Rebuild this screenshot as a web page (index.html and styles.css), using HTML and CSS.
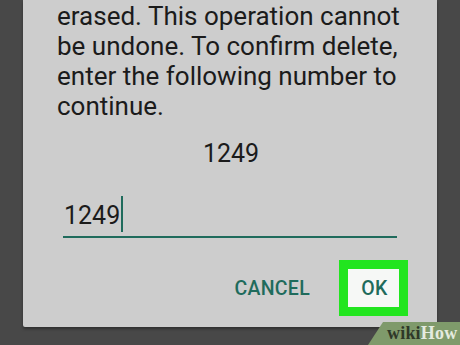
FILE: index.html
```html
<!DOCTYPE html>
<html>
<head>
<meta charset="utf-8">
<link rel="stylesheet" href="styles.css">
</head>
<body>
<div class="screen">
  <div class="dialog">
    <p class="message">erased. This operation cannot be undone. To confirm delete, enter the following number to continue.</p>
    <div class="code">1249</div>
    <div class="field"><span class="value">1249</span><span class="cursor"></span></div>
    <div class="actions">
      <span class="btn cancel">CANCEL</span>
      <span class="ok-wrap"><span class="btn ok">OK</span></span>
    </div>
  </div>
  <div class="watermark"><span class="wiki">wiki</span><span class="how">How</span></div>
</div>
</body>
</html>
```
FILE: styles.css
```css
html, body {
  margin: 0;
  padding: 0;
}
body {
  width: 460px;
  height: 345px;
  overflow: hidden;
  background: #484848;
  font-family: Roboto, "Noto Sans", sans-serif;
}
.screen {
  position: relative;
  width: 460px;
  height: 345px;
}
.dialog {
  margin-left: 23px;
  width: 414px;
  box-sizing: border-box;
  background: #cdcdcd;
  padding: 1px 0 11px 0;
  border-radius: 0 0 2px 2px;
  box-shadow: 0 2px 3px rgba(0,0,0,0.35);
}
.message {
  margin: 0;
  padding: 0 28px 0 34px;
  font-size: 26px;
  line-height: 30px;
  color: #1b1b1b;
}
.code {
  margin-top: 18px;
  text-align: center;
  font-size: 25px;
  line-height: 30px;
  color: #1b1b1b;
  padding-left: 2px;
}
.field {
  display: flex;
  align-items: flex-start;
  margin: 32px 40px 0 40px;
  padding-left: 1px;
  padding-bottom: 5px;
  border-bottom: 2px solid #1f6b5c;
}
.value {
  font-size: 25px;
  line-height: 30px;
  color: #1b1b1b;
}
.cursor {
  width: 2px;
  height: 36px;
  margin: -5px 0 -1px 1px;
  background: #1f6b5c;
}
.actions {
  display: flex;
  justify-content: flex-end;
  align-items: center;
  gap: 29px;
  margin-top: 22px;
  padding-right: 29px;
}
.btn {
  font-weight: 500;
  font-size: 19.5px;
  color: #1f6b5c;
  letter-spacing: 0.3px;
}
.ok-wrap {
  display: flex;
  align-items: center;
  justify-content: center;
  width: 69px;
  height: 56px;
  box-sizing: border-box;
  border: 9px solid #22e51f;
  background: #f6f8f6;
}
.ok {
  padding-left: 2px;
}
.watermark {
  position: absolute;
  right: 0;
  bottom: 0;
  width: 92px;
  height: 23px;
  background: #7f9a6b;
  clip-path: polygon(15px 0, 100% 0, 100% 100%, 0 100%);
  box-sizing: border-box;
  padding: 1px 0 0 19px;
  font-family: "Liberation Serif", "DejaVu Serif", serif;
  font-weight: bold;
  font-size: 18px;
  line-height: 20px;
  letter-spacing: 0.2px;
}
.wiki {
  color: #2e3828;
}
.how {
  color: #e4ebdf;
}
```
